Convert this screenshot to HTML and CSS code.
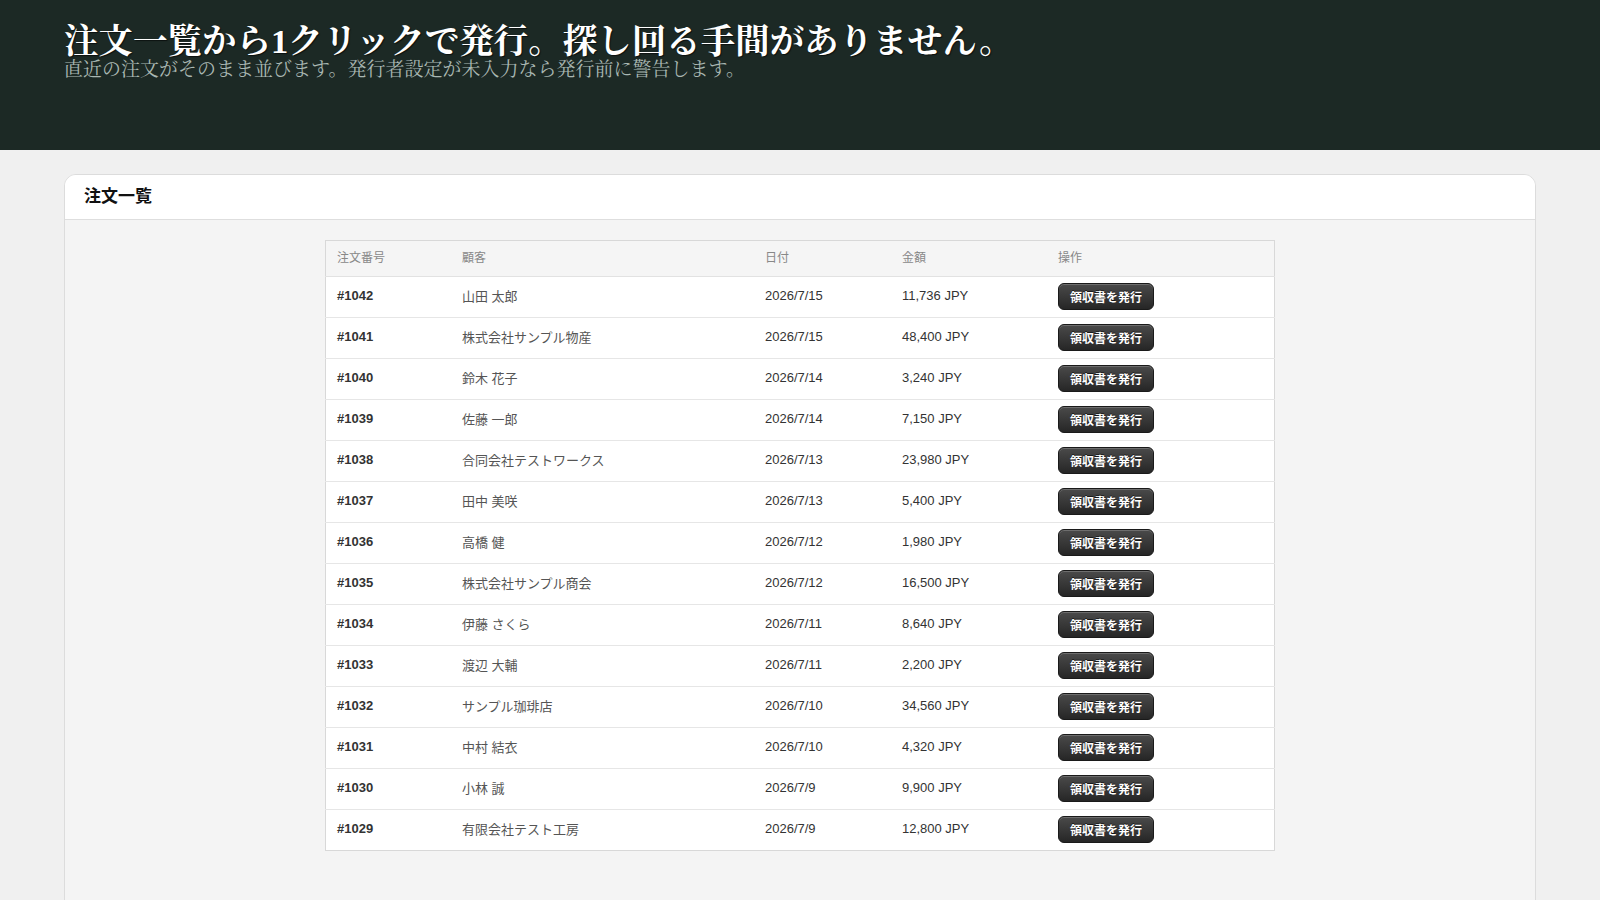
FILE: index.html
```
<!DOCTYPE html>
<html lang="ja">
<head>
<meta charset="utf-8">
<title>注文一覧</title>
<link rel="stylesheet" href="styles.css">
</head>
<body>
<header class="hero">
  <h1 class="hero-title">注文一覧から1クリックで発行。探し回る手間がありません。</h1>
  <p class="hero-sub">直近の注文がそのまま並びます。発行者設定が未入力なら発行前に警告します。</p>
</header>
<main class="main">
  <section class="card">
    <div class="card-head">注文一覧</div>
    <div class="card-body">
      <table class="orders">
        <thead>
          <tr><th class="c-no">注文番号</th><th class="c-cust">顧客</th><th class="c-date">日付</th><th class="c-amt">金額</th><th class="c-op">操作</th></tr>
        </thead>
        <tbody>
          <tr><td class="no">#1042</td><td class="cust">山田 太郎</td><td>2026/7/15</td><td>11,736 JPY</td><td class="op"><button class="btn">領収書を発行</button></td></tr>
          <tr><td class="no">#1041</td><td class="cust">株式会社サンプル物産</td><td>2026/7/15</td><td>48,400 JPY</td><td class="op"><button class="btn">領収書を発行</button></td></tr>
          <tr><td class="no">#1040</td><td class="cust">鈴木 花子</td><td>2026/7/14</td><td>3,240 JPY</td><td class="op"><button class="btn">領収書を発行</button></td></tr>
          <tr><td class="no">#1039</td><td class="cust">佐藤 一郎</td><td>2026/7/14</td><td>7,150 JPY</td><td class="op"><button class="btn">領収書を発行</button></td></tr>
          <tr><td class="no">#1038</td><td class="cust">合同会社テストワークス</td><td>2026/7/13</td><td>23,980 JPY</td><td class="op"><button class="btn">領収書を発行</button></td></tr>
          <tr><td class="no">#1037</td><td class="cust">田中 美咲</td><td>2026/7/13</td><td>5,400 JPY</td><td class="op"><button class="btn">領収書を発行</button></td></tr>
          <tr><td class="no">#1036</td><td class="cust">高橋 健</td><td>2026/7/12</td><td>1,980 JPY</td><td class="op"><button class="btn">領収書を発行</button></td></tr>
          <tr><td class="no">#1035</td><td class="cust">株式会社サンプル商会</td><td>2026/7/12</td><td>16,500 JPY</td><td class="op"><button class="btn">領収書を発行</button></td></tr>
          <tr><td class="no">#1034</td><td class="cust">伊藤 さくら</td><td>2026/7/11</td><td>8,640 JPY</td><td class="op"><button class="btn">領収書を発行</button></td></tr>
          <tr><td class="no">#1033</td><td class="cust">渡辺 大輔</td><td>2026/7/11</td><td>2,200 JPY</td><td class="op"><button class="btn">領収書を発行</button></td></tr>
          <tr><td class="no">#1032</td><td class="cust">サンプル珈琲店</td><td>2026/7/10</td><td>34,560 JPY</td><td class="op"><button class="btn">領収書を発行</button></td></tr>
          <tr><td class="no">#1031</td><td class="cust">中村 結衣</td><td>2026/7/10</td><td>4,320 JPY</td><td class="op"><button class="btn">領収書を発行</button></td></tr>
          <tr><td class="no">#1030</td><td class="cust">小林 誠</td><td>2026/7/9</td><td>9,900 JPY</td><td class="op"><button class="btn">領収書を発行</button></td></tr>
          <tr><td class="no">#1029</td><td class="cust">有限会社テスト工房</td><td>2026/7/9</td><td>12,800 JPY</td><td class="op"><button class="btn">領収書を発行</button></td></tr>
        </tbody>
      </table>
    </div>
  </section>
</main>
</body>
</html>
```

FILE: styles.css
```
html, body {
  margin: 0;
  padding: 0;
}
body {
  background: #f0f0f0;
  font-family: "Liberation Sans", "Noto Sans CJK JP", sans-serif;
  color: #333;
  height: 900px;
  overflow: hidden;
}
.hero {
  background: #1c2925;
  height: 150px;
  box-sizing: border-box;
  padding: 22px 64px 0;
}
.hero-title {
  margin: 0;
  font-family: "Liberation Serif", "Noto Serif CJK JP", serif;
  font-size: 34.5px;
  line-height: 38px;
  font-weight: bold;
  color: #ffffff;
  text-shadow: 1px 1px 1px rgba(0, 0, 0, 0.6);
}
.hero-title, .hero-sub {
  white-space: nowrap;
}
.hero-sub {
  margin: 0;
  font-family: "Liberation Serif", "Noto Serif CJK JP", serif;
  font-size: 19px;
  line-height: 20px;
  color: #a9b7b2;
}
.main {
  padding: 24px 64px 0;
}
.card {
  background: #f4f4f4;
  border: 1px solid #dcdcdc;
  border-radius: 12px 12px 0 0;
  height: 740px;
  overflow: hidden;
}
.card-head {
  background: #ffffff;
  height: 45px;
  box-sizing: border-box;
  border-bottom: 1px solid #dedede;
  padding: 0 19px 6px;
  display: flex;
  align-items: center;
  font-family: "Noto Sans CJK JP", sans-serif;
  font-weight: bold;
  font-size: 17px;
  color: #111;
}
.card-body {
  padding: 20px 0;
}
.orders {
  width: 950px;
  margin: 0 auto;
  border-collapse: collapse;
  border: 1px solid #d8d8d8;
  background: #fff;
  font-size: 13px;
}
.orders th {
  background: #f5f5f5;
  height: 31px;
  text-align: left;
  font-weight: normal;
  font-size: 12px;
  color: #888;
  padding: 0 11px 4px;
  border-bottom: 1px solid #e2e2e2;
}
.orders td {
  height: 36px;
  padding: 0 11px 4px;
  border-bottom: 1px solid #e6e6e6;
  color: #333;
  vertical-align: middle;
}
.orders td.op {
  padding-bottom: 2px;
}
.orders tbody tr:last-child td {
  border-bottom: none;
}
.c-no { width: 103px; }
.c-cust { width: 281px; }
.c-date { width: 115px; }
.c-amt { width: 134px; }
.orders td.no {
  font-weight: bold;
  color: #333;
}
.orders td.cust {
  color: #555;
}
.btn {
  font-family: "Liberation Sans", "Noto Sans CJK JP", sans-serif;
  font-size: 12px;
  font-weight: bold;
  color: #fff;
  background: linear-gradient(#4a4a4a, #262626);
  border: 1px solid #1a1a1a;
  border-radius: 6px;
  height: 27px;
  padding: 0 11px;
  box-shadow: inset 0 1px 0 rgba(255, 255, 255, 0.2);
  text-shadow: 0 -1px 0 rgba(0, 0, 0, 0.6);
  cursor: pointer;
}
```
